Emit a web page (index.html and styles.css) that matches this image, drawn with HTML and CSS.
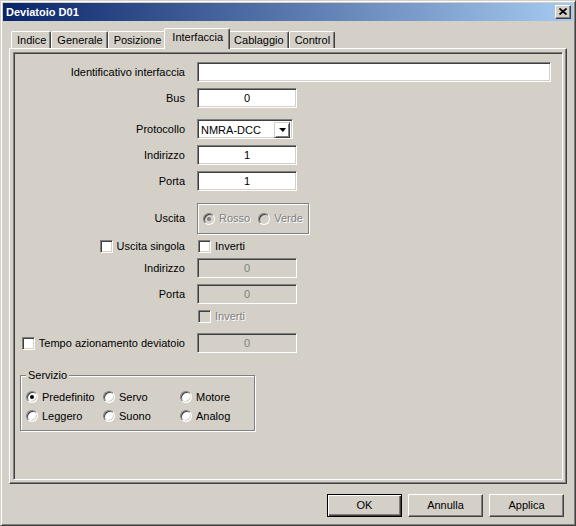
FILE: index.html
```html
<!DOCTYPE html>
<html lang="it">
<head>
    <meta charset="UTF-8">
    <title>Deviatoio D01</title>
    <link rel="stylesheet" href="styles.css">
</head>
<body>
    <div class="window">
        <div class="titlebar">
            <span>Deviatoio D01</span>
            <span class="close-btn">
                <svg width="8" height="7" viewBox="0 0 8 7"><path d="M0.5 0.5 L7.5 6.5 M7.5 0.5 L0.5 6.5" stroke="#000" stroke-width="1.7" fill="none"/></svg>
            </span>
        </div>
        <div class="dialog">
            <div class="tabs">
                <div class="tab">Indice</div>
                <div class="tab">Generale</div>
                <div class="tab">Posizione</div>
                <div class="tab active">Interfaccia</div>
                <div class="tab">Cablaggio</div>
                <div class="tab">Control</div>
            </div>
            <div class="page">
                <div class="frame">
                    <div class="row row-first">
                        <div class="label">Identificativo interfaccia</div>
                        <div class="field field-wide"></div>
                    </div>
                    <div class="row">
                        <div class="label">Bus</div>
                        <div class="field">0</div>
                    </div>
                    <div class="row row-gap11">
                        <div class="label">Protocollo</div>
                        <div class="field combo">
                            <span>NMRA-DCC</span>
                            <span class="drop-btn"><span class="arrow"></span></span>
                        </div>
                    </div>
                    <div class="row">
                        <div class="label">Indirizzo</div>
                        <div class="field">1</div>
                    </div>
                    <div class="row">
                        <div class="label">Porta</div>
                        <div class="field">1</div>
                    </div>
                    <div class="row row-gap12">
                        <div class="label">Uscita</div>
                        <div class="group group-uscita">
                            <label class="opt disabled"><span class="radio checked"></span>Rosso</label>
                            <label class="opt disabled opt-verde"><span class="radio"></span>Verde</label>
                        </div>
                    </div>
                    <div class="row row-check">
                        <div class="label">
                            <label class="opt"><span class="checkbox"></span>Uscita singola</label>
                        </div>
                        <div class="control">
                            <label class="opt"><span class="checkbox"></span>Inverti</label>
                        </div>
                    </div>
                    <div class="row row-small">
                        <div class="label">Indirizzo</div>
                        <div class="field disabled">0</div>
                    </div>
                    <div class="row">
                        <div class="label">Porta</div>
                        <div class="field disabled">0</div>
                    </div>
                    <div class="row row-check">
                        <div class="label"></div>
                        <div class="control">
                            <label class="opt disabled"><span class="checkbox"></span>Inverti</label>
                        </div>
                    </div>
                    <div class="row row-gap9">
                        <div class="label">
                            <label class="opt"><span class="checkbox"></span>Tempo azionamento deviatoio</label>
                        </div>
                        <div class="field disabled">0</div>
                    </div>
                    <div class="group group-servizio">
                        <span class="legend">Servizio</span>
                        <label class="opt"><span class="radio checked"></span>Predefinito</label>
                        <label class="opt"><span class="radio"></span>Servo</label>
                        <label class="opt"><span class="radio"></span>Motore</label>
                        <label class="opt"><span class="radio"></span>Leggero</label>
                        <label class="opt"><span class="radio"></span>Suono</label>
                        <label class="opt"><span class="radio"></span>Analog</label>
                    </div>
                </div>
            </div>
            <div class="buttons">
                <div class="btn default"><span>OK</span></div>
                <div class="btn"><span>Annulla</span></div>
                <div class="btn"><span>Applica</span></div>
            </div>
        </div>
    </div>
</body>
</html>
```

FILE: styles.css
```css
/*reset*/
* {
    margin: 0;
    padding: 0;
    box-sizing: border-box;
}

/*default*/
body {
    font: 11px/13px "Liberation Sans", Arial, sans-serif;
    color: #000;
    background-color: #d4d0c8;
}

/*window*/
.window {
    width: 576px;
    height: 526px;
    background-color: #d4d0c8;
    border: 1px solid;
    border-color: #d4d0c8 #404040 #404040 #d4d0c8;
    box-shadow: inset 1px 1px #fff, inset -1px -1px #808080;
    padding: 2px;
    display: flex;
    flex-direction: column;
}
.titlebar {
    height: 18px;
    flex-shrink: 0;
    background: linear-gradient(to right, #0a246a, #a6caf0);
    color: #fff;
    font-weight: bold;
    display: flex;
    align-items: center;
    justify-content: space-between;
    padding: 0 2px 0 3px;
}
.close-btn {
    width: 16px;
    height: 14px;
    background-color: #d4d0c8;
    border: 1px solid;
    border-color: #fff #404040 #404040 #fff;
    box-shadow: inset -1px -1px #808080;
    display: flex;
    align-items: center;
    justify-content: center;
}
.close-btn svg {
    display: block;
    margin: 0 1px 1px 0;
}

/*dialog*/
.dialog {
    flex: 1;
    padding: 7px 6px 6px;
    display: flex;
    flex-direction: column;
}
.tabs {
    display: flex;
    align-items: flex-end;
    height: 20px;
    padding-left: 2px;
    position: relative;
    z-index: 1;
}
.tab {
    height: 17px;
    padding: 2px 4px 0 5px;
    background-color: #d4d0c8;
    border-top: 1px solid #fff;
    border-left: 1px solid #fff;
    border-right: 1px solid #404040;
    box-shadow: inset -1px 0 #808080;
    border-top-left-radius: 2px;
    border-top-right-radius: 2px;
}
.tab.active {
    height: 21px;
    margin: 0 -2px -1px;
    padding: 2px 6px 0 7px;
    position: relative;
}
.page {
    height: 436px;
    border: 1px solid;
    border-color: #fff #404040 #404040 #fff;
    box-shadow: inset -1px -1px #808080;
    padding: 3px;
}
.frame {
    height: 100%;
    border: 1px solid;
    border-color: #808080 #fff #fff #808080;
    box-shadow: inset 1px 1px #404040;
    padding: 0;
}

/*rows*/
.row {
    display: flex;
    align-items: center;
    margin-top: 6px;
}
.row-first {
    margin-top: 9px;
}
.row-gap11 {
    margin-top: 11px;
}
.row-gap12 {
    margin-top: 12px;
}
.row-gap9 {
    margin-top: 9px;
}
.row-check {
    height: 16px;
    margin-top: 4px;
}
.row-small {
    margin-top: 4px;
}
.label {
    width: 171px;
    flex-shrink: 0;
    text-align: right;
    display: flex;
    justify-content: flex-end;
}
.control {
    margin-left: 13px;
}

/*fields*/
.field {
    margin-left: 12px;
    width: 100px;
    height: 20px;
    background-color: #fff;
    border: 1px solid;
    border-color: #808080 #fff #fff #808080;
    box-shadow: inset 1px 1px #404040, inset -1px -1px #d4d0c8;
    text-align: center;
    line-height: 18px;
}
.field-wide {
    width: 354px;
}
.field.disabled {
    background-color: #d4d0c8;
    color: #808080;
}
.combo {
    width: 96px;
    display: flex;
    justify-content: space-between;
    text-align: left;
    padding: 2px 2px 2px 3px;
    line-height: 16px;
}
.drop-btn {
    width: 16px;
    height: 16px;
    border: 1px solid;
    border-color: #d4d0c8 #404040 #404040 #d4d0c8;
    box-shadow: inset 1px 1px #fff, inset -1px -1px #808080;
    display: flex;
    align-items: center;
    justify-content: center;
}
.arrow {
    width: 0;
    height: 0;
    border-left: 4px solid transparent;
    border-right: 3px solid transparent;
    border-top: 4px solid #000;
}

/*options*/
.opt {
    display: flex;
    align-items: center;
    gap: 4px;
    white-space: nowrap;
}
.opt.disabled {
    color: #808080;
    text-shadow: 1px 1px #fff;
}
.checkbox {
    width: 13px;
    height: 13px;
    flex-shrink: 0;
    background-color: #fff;
    border: 1px solid;
    border-color: #808080 #fff #fff #808080;
    box-shadow: inset 1px 1px #404040, inset -1px -1px #d4d0c8;
}
.opt.disabled .checkbox {
    background-color: #d4d0c8;
}
.radio {
    width: 12px;
    height: 12px;
    flex-shrink: 0;
    border-radius: 50%;
    background-color: #fff;
    border: 1px solid;
    border-color: #808080 #fff #fff #808080;
    box-shadow: inset 1px 1px #404040, inset -1px -1px #d4d0c8;
    display: flex;
    align-items: center;
    justify-content: center;
}
.radio.checked::after {
    content: "";
    width: 4px;
    height: 4px;
    border-radius: 50%;
    background-color: #000;
}
.opt.disabled .radio {
    background-color: #d4d0c8;
}
.opt.disabled .radio.checked::after {
    background-color: #808080;
}

/*groups*/
.group {
    border: 1px solid #808080;
    box-shadow: inset 1px 1px #fff, 1px 1px #fff;
}
.group-uscita {
    margin-left: 12px;
    width: 112px;
    height: 31px;
    display: flex;
    align-items: center;
    padding-left: 5px;
}
.opt-verde {
    margin-left: 8px;
}
.group-servizio {
    position: relative;
    margin: 22px 0 0 6px;
    width: 235px;
    height: 56px;
    display: grid;
    grid-template-columns: 77px 77px 77px;
    grid-auto-rows: 16px;
    row-gap: 3px;
    padding: 13px 0 0 5px;
}
.legend {
    position: absolute;
    top: -7px;
    left: 5px;
    padding: 0 2px;
    background-color: #d4d0c8;
}

/*buttons*/
.buttons {
    display: flex;
    justify-content: flex-end;
    gap: 6px;
    margin-top: 10px;
    padding-right: 3px;
}
.btn {
    width: 75px;
    height: 23px;
    border: 1px solid;
    border-color: #fff #404040 #404040 #fff;
    box-shadow: inset -1px -1px #808080;
    display: flex;
    align-items: center;
    justify-content: center;
}
.btn.default {
    border-color: #000;
    box-shadow: inset 1px 1px #fff, inset -1px -1px #404040, inset -2px -2px #808080;
}
```
